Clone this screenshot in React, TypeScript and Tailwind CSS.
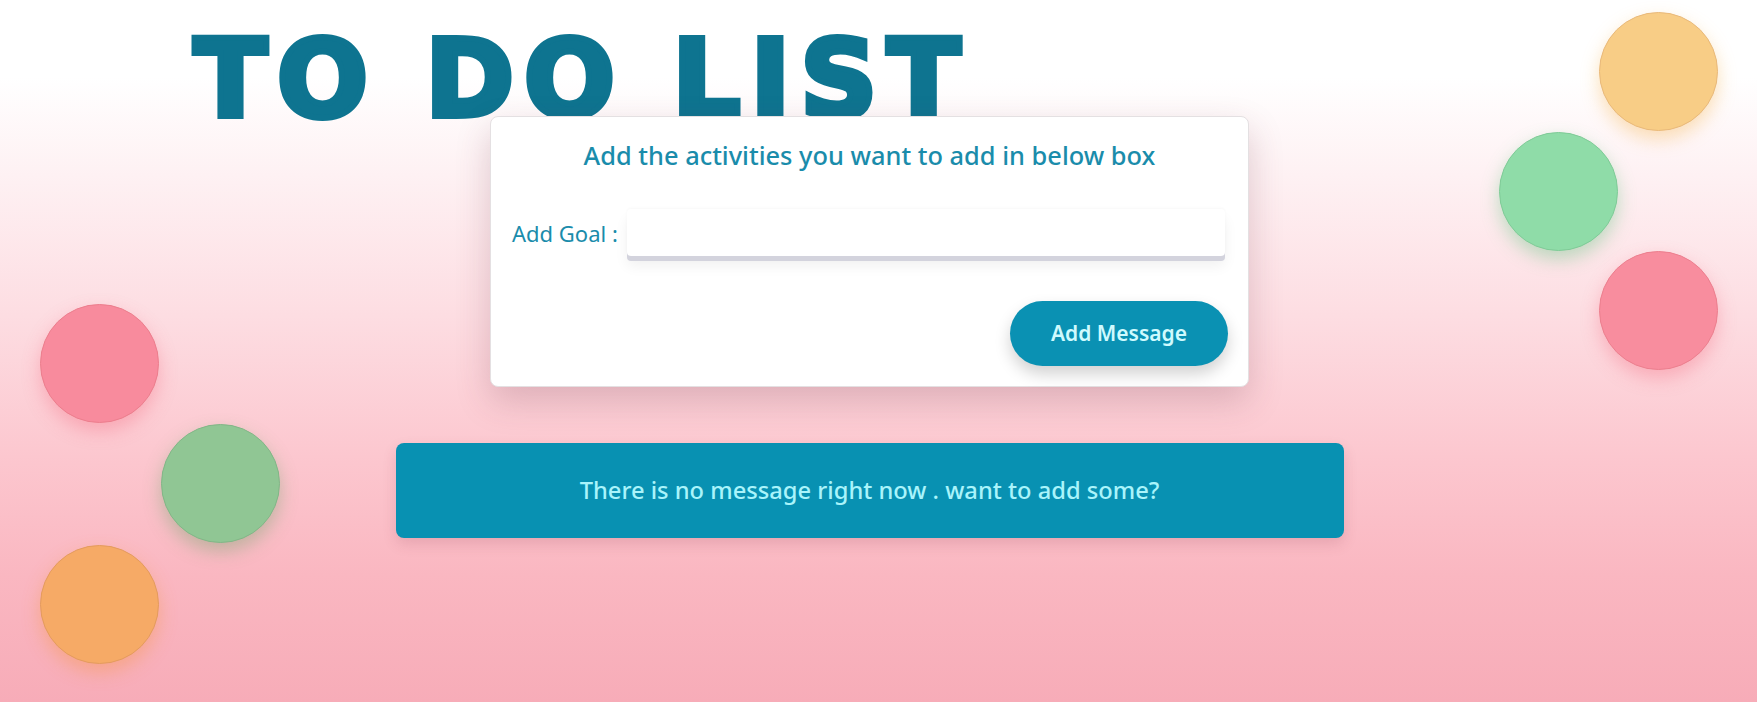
const circles = [
  { key: "l-red", cls: "left-[40px] top-[304px] bg-[#f88b9d] border-[#ec7e8d] shadow-[0_8px_18px_rgba(244,96,120,0.35)]" },
  { key: "l-green", cls: "left-[161px] top-[424px] bg-[#90c694] border-[#82b687] shadow-[0_8px_18px_rgba(80,160,90,0.35)]" },
  { key: "l-orange", cls: "left-[40px] top-[545px] bg-[#f6aa66] border-[#e49b5e] shadow-[0_8px_18px_rgba(245,150,60,0.4)]" },
  { key: "r-yellow", cls: "left-[1599px] top-[12px] bg-[#f8cd86] border-[#e9b97a] shadow-[0_8px_18px_rgba(245,180,80,0.4)]" },
  { key: "r-green", cls: "left-[1499px] top-[132px] bg-[#8fdca8] border-[#7fcb97] shadow-[0_8px_18px_rgba(70,190,110,0.35)]" },
  { key: "r-red", cls: "left-[1599px] top-[251px] bg-[#f88d9e] border-[#ec7f8e] shadow-[0_8px_18px_rgba(244,96,120,0.35)]" },
];

export default function App() {
  return (
    <div className="relative min-h-[702px] overflow-hidden bg-[linear-gradient(180deg,#ffffff_0%,#ffffff_11%,#fef1f3_25%,#fddde2_45%,#fcc7cf_65%,#fab7c1_82%,#f7acb8_100%)] font-['Noto_Sans',sans-serif]">
      {circles.map((c) => (
        <div key={c.key} className={`absolute h-[119px] w-[119px] rounded-full border ${c.cls}`} />
      ))}

      <h1 className="pl-[194px] pt-[26px] font-['DejaVu_Sans',sans-serif] text-[107px] font-bold leading-none tracking-[10px] text-[#0e7490] [-webkit-text-stroke:6px_#0e7490]">
        TO DO LIST
      </h1>

      <div className="relative z-10 flex flex-col items-center pr-[18px]">
        <div className="-mt-[17px] flex w-[759px] flex-col rounded-lg border border-[#e4e0e2] bg-white px-[20px] pb-[20px] pt-[22px] shadow-[0_14px_34px_rgba(110,50,70,0.22)]">
          <h2 className="text-center text-[25.4px] leading-[32px] font-medium text-[#1a8cab]">
            Add the activities you want to add in below box
          </h2>

          <div className="mt-[38px] flex items-center gap-[9px] pl-[1px] pr-[3px]">
            <label className="text-[22px] leading-[30px] text-[#1a8cab]">Add Goal :</label>
            <input
              type="text"
              className="h-[47px] flex-1 rounded-sm bg-white px-3 text-[18px] text-gray-700 shadow-[0_5px_0_#d3d3dd,0_10px_14px_rgba(0,0,0,0.06),0_-1px_3px_rgba(0,0,0,0.03)] outline-none"
            />
          </div>

          <div className="mt-[45px] flex justify-end">
            <button className="h-[65px] w-[218px] rounded-full bg-[#0a91b3] text-[21px] font-semibold text-[#cffafe] shadow-[0_8px_16px_rgba(0,0,0,0.18)]">
              Add Message
            </button>
          </div>
        </div>

        <div className="mt-[56px] flex h-[95px] w-[948px] items-center justify-center rounded-lg bg-[#0891b2] shadow-[0_6px_14px_rgba(120,40,60,0.15)]">
          <p className="text-[23.7px] font-medium text-[#a9f4fb]">There is no message right now . want to add some?</p>
        </div>
      </div>
    </div>
  );
}
